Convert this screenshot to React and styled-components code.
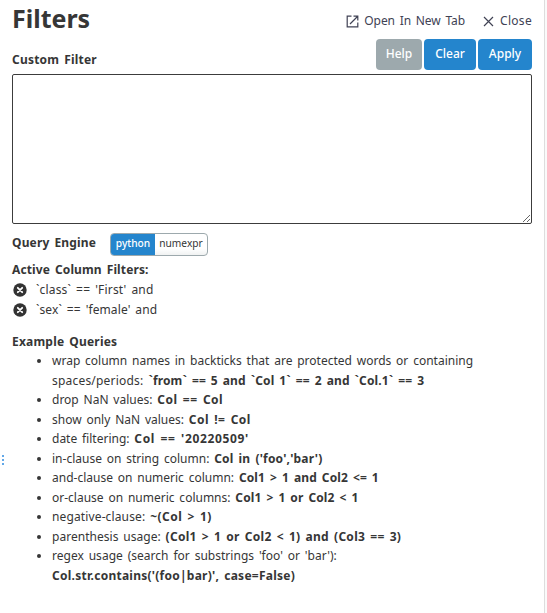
import React from "react";
import styled, { createGlobalStyle } from "styled-components";

const Global = createGlobalStyle`
  * { box-sizing: border-box; }
  body { margin: 0; background: #fff; overflow: hidden; }
`;
const Page = styled.main`
  display: flex;
  width: 547px;
  height: 613px;
  font: 12px/20px "Noto Sans", sans-serif;
  color: #363636;
`;
const Gutter = styled.div`
  width: 12px;
  display: flex;
  align-items: center;
  padding: 307px 0 0 2px;
  height: 613px;
`;
const Panel = styled.section`
  width: 520px;
  white-space: nowrap;
`;
const Edge = styled.aside`
  margin-left: 12px;
  width: 3px;
  background: #fafafa;
  border-left: 1px solid #ddd;
`;
const Header = styled.header`
  display: flex;
  height: 39px;
  justify-content: space-between;
`;
const Title = styled.h1`
  margin: 0;
  font-size: 25px;
  line-height: 37px;
`;
const Links = styled.nav`
  display: flex;
  padding-top: 11px;
  color: #404254;
`;
const Link = styled.a`
  display: flex;
  align-items: center;
  height: 20px;
  margin-left: 18px;
  svg { margin-right: ${(p) => p.$gap}px; }
`;
const Toolbar = styled.div`
  display: flex;
  justify-content: space-between;
  height: 35px;
`;
const Label = styled.b`
  width: ${(p) => p.$width || "auto"};
  line-height: ${(p) => p.$line || 20}px;
`;
const Buttons = styled.div`
  display: flex;
  gap: 2px;
`;
const Button = styled.button`
  width: ${(p) => p.$width}px;
  height: 31px;
  padding: 0 0 2px;
  border: 0;
  border-radius: 4px;
  background: ${(p) => (p.$muted ? "#9da9ad" : "#2485cd")};
  color: #fff;
  font: 500 12px "Noto Sans", sans-serif;
`;
const Editor = styled.textarea`
  display: block;
  width: 520px;
  height: 150px;
  border: 1px solid #3c3c3c;
  border-radius: 2px;
  background: #fff;
  outline: 0;
`;
const Engine = styled.div`
  display: flex;
  height: 36px;
  padding-top: 9px;
`;
const Toggle = styled.div`
  display: flex;
  width: 98px;
  height: 23px;
  border: 1px solid #9da9ad;
  border-radius: 4px;
  overflow: hidden;
  background: linear-gradient(#fff 70%, #f0f2f2);
`;
const Option = styled.span`
  width: ${(p) => p.$width}px;
  text-align: center;
  font-size: 10.2px;
  line-height: 19px;
  ${(p) => p.$on && "background: #2485cd; color: #fff; font-weight: 500; line-height: 19px;"}
`;
const Filter = styled.div`
  display: flex;
  height: 20px;
  svg { margin: 3px 9px 0 1px; }
`;
const Heading = styled.div`
  height: 20px;
  margin-top: ${(p) => p.$gap || 0}px;
`;
const Queries = styled.ul`
  margin: -1px 0 0;
  padding: 0 0 0 40px;
  line-height: 19.55px;
`;
const T = styled.span`
  letter-spacing: ${(p) => p.$track || 0}px;
  word-spacing: 1.7px;
  font-weight: ${(p) => (p.$bold ? 700 : 400)};
`;

const Remove = () => (
  <svg width="14" height="14" viewBox="0 0 14 14">
    <circle cx="7" cy="7" r="6.7" fill="#333" />
    <path d="M4.8 4.8l4.4 4.4M9.2 4.8l-4.4 4.4" stroke="#fff" strokeWidth="1.8" strokeLinecap="round" />
  </svg>
);

const QUERIES = [
  ["drop NaN values: ", "Col == Col", 0, 0.5],
  ["show only NaN values: ", "Col != Col", 0, 0.45],
  ["date filtering: ", "Col == '20220509'", 0, 0.65],
  ["in-clause on string column: ", "Col in ('foo','bar')", 0, 0.2],
  ["and-clause on numeric column: ", "Col1 > 1 and Col2 <= 1", 0, 0.13],
  ["or-clause on numeric columns: ", "Col1 > 1 or Col2 < 1", 0, 0.13],
  ["negative-clause: ", "~(Col > 1)", 0.13, 0.45],
  ["parenthesis usage: ", "(Col1 > 1 or Col2 < 1) and (Col3 == 3)", 0.03, 0.28],
];

export default function App() {
  return (
    <Page>
      <Global />
      <Gutter>
        <svg width="2" height="10" viewBox="0 0 2 10">
          <path d="M0 0h2v2H0zM0 4h2v2H0zM0 8h2v2H0z" fill="#62a8e8" />
        </svg>
      </Gutter>
      <Panel>
        <Header>
          <Title><T $bold>Filters</T></Title>
          <Links>
            <Link $gap={5}>
              <svg width="13" height="13" viewBox="0 0 13 13" fill="none" stroke="#404254" strokeWidth="1.2">
                <path d="M5.5 1.2H1.2v10.6h10.6V7.5M7.5 1.2h4.3v4.3M11.5 1.5L4 9" />
              </svg>
              <T $track={-0.07}>Open In New Tab</T>
            </Link>
            <Link $gap={6}>
              <svg width="11" height="11" viewBox="0 0 11 11" fill="none" stroke="#404254" strokeWidth="1.2">
                <path d="M1 1l9 9M10 1l-9 9" />
              </svg>
              <T $track={0.3}>Close</T>
            </Link>
          </Links>
        </Header>
        <Toolbar>
          <Label $line={42}><T $bold $track={0.2}>Custom Filter</T></Label>
          <Buttons>
            <Button $width={46} $muted>Help</Button>
            <Button $width={52}>Clear</Button>
            <Button $width={54}>Apply</Button>
          </Buttons>
        </Toolbar>
        <Editor />
        <Engine>
          <Label $width="98px"><T $bold $track={0.15}>Query Engine</T></Label>
          <Toggle>
            <Option $width={44} $on>python</Option>
            <Option $width={52}>numexpr</Option>
          </Toggle>
        </Engine>
        <Heading><T $bold $track={0.12}>Active Column Filters:</T></Heading>
        <Filter><Remove /><T $track={0.18}>`class` == 'First' and</T></Filter>
        <Filter><Remove /><T $track={0.1}>`sex` == 'female' and</T></Filter>
        <Heading $gap={12}><T $bold $track={0.2}>Example Queries</T></Heading>
        <Queries>
          <li>
            <T>wrap column names in backticks that are protected words or containing</T><br />
            <T $track={0.2}>spaces/periods: </T>
            <T $bold $track={0.13}>`from` == 5 and `Col 1` == 2 and `Col.1` == 3</T>
          </li>
          {QUERIES.map(([text, code, track, codeTrack]) => (
            <li key={text}><T $track={track}>{text}</T><T $bold $track={codeTrack}>{code}</T></li>
          ))}
          <li>
            <T $track={0.02}>regex usage (search for substrings 'foo' or 'bar'):</T><br />
            <T $bold $track={0.25}>Col.str.contains('(foo|bar)', case=False)</T>
          </li>
        </Queries>
      </Panel>
      <Edge />
    </Page>
  );
}
